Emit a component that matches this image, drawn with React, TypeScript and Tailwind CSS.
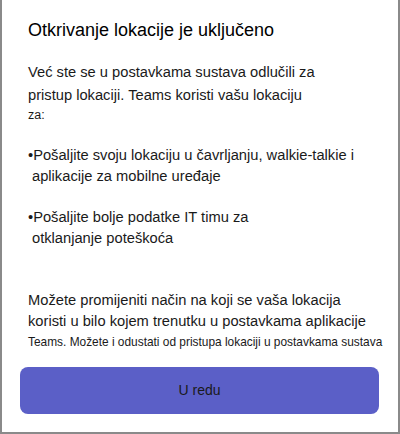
export default function App() {
  return (
    <div className="w-[400px] h-[434px] bg-white border-x-2 border-b-2 border-[#8a8a8a] font-['Liberation_Sans',Arial,sans-serif] text-[#1a1a1a] whitespace-nowrap overflow-hidden">
      <div className="pl-[26px] pr-2 pt-[19px]">
        <h1 className="text-[18px] leading-[22px] text-black">Otkrivanje lokacije je uključeno</h1>

        <div className="mt-[20px] text-[14.7px]">
          <p className="leading-[23px]">Već ste se u postavkama sustava odlučili za</p>
          <p className="leading-[23px]">pristup lokaciji. Teams koristi vašu lokaciju</p>
          <p className="text-[12.5px] leading-[16px]">za:</p>
        </div>

        <div className="mt-[22px] text-[14.7px] leading-[21px]">
          <p>•Pošaljite svoju lokaciju u čavrljanju, walkie-talkie i</p>
          <p className="pl-[4px]">aplikacije za mobilne uređaje</p>
        </div>

        <div className="mt-[20px] text-[14.7px] leading-[21px]">
          <p>•Pošaljite bolje podatke IT timu za</p>
          <p className="pl-[4px]">otklanjanje poteškoća</p>
        </div>

        <div className="mt-[41px]">
          <p className="text-[14.7px] leading-[21px]">Možete promijeniti način na koji se vaša lokacija</p>
          <p className="text-[14.7px] leading-[21px]">koristi u bilo kojem trenutku u postavkama aplikacije</p>
          <p className="text-[11.9px] leading-[21px]">Teams. Možete i odustati od pristupa lokaciji u postavkama sustava</p>
        </div>
      </div>

      <div className="px-[18px] pr-[19px] mt-[14px]">
        <button className="w-full h-[47px] rounded-[8px] bg-[#5b5fc7] text-[14px] text-[#1a1a1a]">U redu</button>
      </div>
    </div>
  );
}
